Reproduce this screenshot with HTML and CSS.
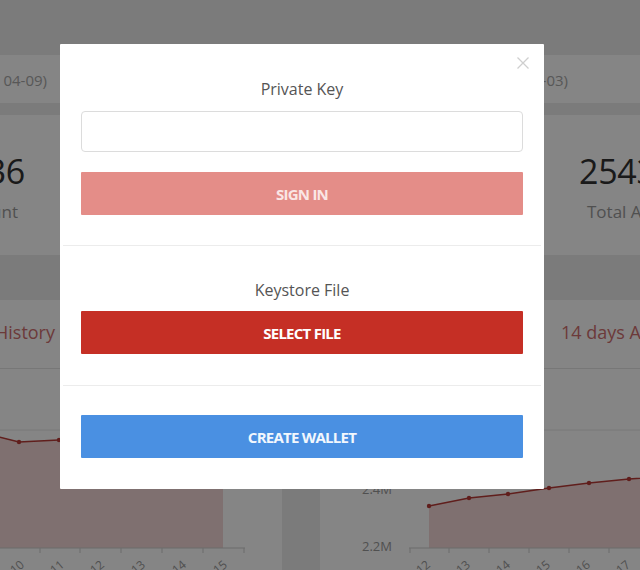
FILE: index.html
```html
<!DOCTYPE html>
<html lang="en">
<head>
<meta charset="utf-8">
<title>Tronscan - Sign in</title>
<link rel="stylesheet" href="styles.css">
</head>
<body>
<div class="page">
  <div class="topbar"></div>

  <div class="band band-head">
    <div class="cell cell-l head-l"><span class="head-text">Transactions (03-27 ~ 04-09)</span></div>
    <div class="cell cell-r head-r"><span class="head-text">Accounts (03-21 ~ 04-03)</span></div>
  </div>

  <div class="band band-stats">
    <div class="cell cell-l stat stat-l">
      <div class="stat-num">1523436</div>
      <div class="stat-label">Transactions Count</div>
    </div>
    <div class="cell cell-r stat stat-r">
      <div class="stat-num">2543187</div>
      <div class="stat-label">Total Accounts</div>
    </div>
  </div>

  <div class="band band-charts">
    <div class="chart-card chart-l">
      <div class="chart-head"><span class="chart-title">14 days Transaction History</span></div>
      <svg class="chart-svg" width="282" height="201" viewBox="0 0 282 201">
        <line x1="0" y1="61" x2="245" y2="61" class="grid"/>
        <polygon class="area" points="-5,67 19,73 59,71 100,69 140,67 181,65 223,63 223,179 -5,179"/>
        <polyline class="series" points="-5,67 19,73 59,71 100,69 140,67 181,65 223,63"/>
        <circle cx="19" cy="73" r="2.2" class="dot"/>
        <circle cx="59" cy="71" r="2.2" class="dot"/>
        <circle cx="100" cy="69" r="2.2" class="dot"/>
        <circle cx="140" cy="67" r="2.2" class="dot"/>
        <circle cx="181" cy="65" r="2.2" class="dot"/>
        <circle cx="223" cy="63" r="2.2" class="dot"/>
        <line x1="0" y1="179" x2="245" y2="179" class="axis"/>
        <line x1="40" y1="179" x2="40" y2="184" class="axis"/>
        <line x1="80" y1="179" x2="80" y2="184" class="axis"/>
        <line x1="121" y1="179" x2="121" y2="184" class="axis"/>
        <line x1="162" y1="179" x2="162" y2="184" class="axis"/>
        <line x1="203" y1="179" x2="203" y2="184" class="axis"/>
        <line x1="244" y1="179" x2="244" y2="184" class="axis"/>
        <text x="25" y="197" class="xlab" transform="rotate(-40 25 197)">04-10</text>
        <text x="65" y="197" class="xlab" transform="rotate(-40 65 197)">04-11</text>
        <text x="105" y="197" class="xlab" transform="rotate(-40 105 197)">04-12</text>
        <text x="146" y="197" class="xlab" transform="rotate(-40 146 197)">04-13</text>
        <text x="187" y="197" class="xlab" transform="rotate(-40 187 197)">04-14</text>
        <text x="228" y="197" class="xlab" transform="rotate(-40 228 197)">04-15</text>
      </svg>
    </div>
    <div class="chart-card chart-r">
      <div class="chart-head"><span class="chart-title">14 days Address Growth</span></div>
      <svg class="chart-svg" width="320" height="201" viewBox="0 0 320 201">
        <line x1="90" y1="61" x2="320" y2="61" class="grid"/>
        <text x="72" y="125" class="ylab">2.4M</text>
        <text x="72" y="182" class="ylab">2.2M</text>
        <polygon class="area" points="109,137 149,129 188,125 229,119 269,114 309,110 349,107 349,179 109,179"/>
        <polyline class="series" points="109,137 149,129 188,125 229,119 269,114 309,110 349,107"/>
        <circle cx="109" cy="137" r="2.2" class="dot"/>
        <circle cx="149" cy="129" r="2.2" class="dot"/>
        <circle cx="188" cy="125" r="2.2" class="dot"/>
        <circle cx="229" cy="119" r="2.2" class="dot"/>
        <circle cx="269" cy="114" r="2.2" class="dot"/>
        <circle cx="309" cy="110" r="2.2" class="dot"/>
        <line x1="89" y1="179" x2="320" y2="179" class="axis"/>
        <line x1="90" y1="179" x2="90" y2="184" class="axis"/>
        <line x1="129" y1="179" x2="129" y2="184" class="axis"/>
        <line x1="169" y1="179" x2="169" y2="184" class="axis"/>
        <line x1="209" y1="179" x2="209" y2="184" class="axis"/>
        <line x1="249" y1="179" x2="249" y2="184" class="axis"/>
        <line x1="289" y1="179" x2="289" y2="184" class="axis"/>
        <text x="111" y="197" class="xlab" transform="rotate(-40 111 197)">04-12</text>
        <text x="151" y="197" class="xlab" transform="rotate(-40 151 197)">04-13</text>
        <text x="191" y="197" class="xlab" transform="rotate(-40 191 197)">04-14</text>
        <text x="231" y="197" class="xlab" transform="rotate(-40 231 197)">04-15</text>
        <text x="271" y="197" class="xlab" transform="rotate(-40 271 197)">04-16</text>
        <text x="311" y="197" class="xlab" transform="rotate(-40 311 197)">04-17</text>
      </svg>
    </div>
  </div>
</div>

<div class="overlay"></div>

<div class="modal" role="dialog">
  <button class="close" aria-label="Close">
    <svg width="12" height="12" viewBox="0 0 12 12"><path d="M0.5 0.5 L11.5 11.5 M11.5 0.5 L0.5 11.5" stroke="#cfcfcf" stroke-width="1.3" fill="none"/></svg>
  </button>
  <div class="section sec-key">
    <div class="label">Private Key</div>
    <input class="input" type="text">
    <div class="btn btn-disabled">SIGN IN</div>
  </div>
  <div class="divider"></div>
  <div class="section sec-file">
    <div class="label">Keystore File</div>
    <div class="btn btn-red">SELECT FILE</div>
  </div>
  <div class="divider"></div>
  <div class="section sec-create">
    <div class="btn btn-blue">CREATE WALLET</div>
  </div>
</div>
</body>
</html>
```

FILE: styles.css
```css
* { box-sizing: border-box; }
html, body { margin: 0; padding: 0; }
body {
  width: 640px;
  height: 570px;
  overflow: hidden;
  background: #ebebeb;
  font-family: "Open Sans", "Liberation Sans", sans-serif;
}

.page { width: 640px; }
.topbar { height: 55px; }

.band {
  display: grid;
  grid-template-columns: 282px 320px;
  column-gap: 38px;
}

.cell { display: flex; white-space: nowrap; }

.band-head { height: 48px; background: #fff; }
.head-l { justify-content: flex-end; padding-right: 235px; }
.head-r { justify-content: flex-end; padding-right: 72px; }
.head-text { font-size: 15px; line-height: 50px; color: #a8a8a8; }

.band-stats { height: 140px; background: #fff; margin-top: 12px; }
.stat { flex-direction: column; padding-top: 36px; }
.stat-l { align-items: flex-end; padding-right: 257px; }
.stat-r { align-items: flex-start; padding-left: 259px; }
.stat-num { font-size: 34px; line-height: 40px; color: #333; letter-spacing: -0.3px; }
.stat-label { font-size: 17px; line-height: 22px; color: #9a9a9a; margin-top: 10px; }
.stat-l .stat-label { margin-right: 7px; }
.stat-r .stat-label { margin-left: 8px; }

.band-charts { margin-top: 45px; height: 270px; }
.chart-card { background: #fff; display: flex; flex-direction: column; overflow: hidden; }
.chart-head {
  height: 69px;
  border-bottom: 1px solid #e4e4e4;
  display: flex;
  white-space: nowrap;
  padding-bottom: 4px;
}
.chart-l .chart-head { justify-content: flex-end; padding-right: 227px; }
.chart-r .chart-head { justify-content: flex-start; padding-left: 241px; }
.chart-title { font-size: 18px; line-height: 64px; color: #d07070; }
.chart-svg { display: block; overflow: visible; }

.grid { stroke: #e6e6e6; stroke-width: 1; }
.axis { stroke: #cfcfcf; stroke-width: 1; }
.area { fill: rgba(194, 53, 49, 0.2); }
.series { fill: none; stroke: #b83a36; stroke-width: 1.4; }
.dot { fill: #b83a36; }
.xlab { font-family: "Open Sans", sans-serif; font-size: 12px; fill: #9a9a9a; text-anchor: end; }
.ylab { font-family: "Open Sans", sans-serif; font-size: 13px; fill: #9a9a9a; text-anchor: end; }

.overlay {
  position: fixed;
  inset: 0;
  background: rgba(0, 0, 0, 0.48);
}

.modal {
  position: fixed;
  left: 60px;
  top: 44px;
  width: 484px;
  background: #fff;
  border-radius: 1px;
}

.close {
  position: absolute;
  top: 13px;
  right: 15px;
  width: 12px;
  height: 12px;
  padding: 0;
  border: 0;
  background: none;
  display: block;
}
.close svg { display: block; }

.section { padding: 0 21px; display: flex; flex-direction: column; }
.sec-key { padding-top: 34px; padding-bottom: 30px; }
.sec-file { padding-top: 33px; padding-bottom: 31px; }
.sec-create { padding-top: 29px; padding-bottom: 31px; }

.label {
  font-size: 16px;
  line-height: 22px;
  color: #555;
  text-align: center;
}

.input {
  margin-top: 11px;
  height: 41px;
  width: 100%;
  border: 1px solid #dcdcdc;
  border-radius: 4px;
  background: #fff;
  font-family: inherit;
}

.btn {
  height: 43px;
  display: flex;
  align-items: center;
  justify-content: center;
  font-size: 15px;
  font-weight: 700;
  letter-spacing: -0.75px;
  color: #fff;
  border-radius: 1px;
}
.sec-key .btn { margin-top: 20px; }
.sec-file .btn { margin-top: 10px; }

.btn-disabled { background: #e48d88; color: #fae6e5; }
.btn-red { background: #c52f25; }
.btn-blue { background: #4a90e2; color: #f2f7fd; }

.divider { height: 1px; background: #ececec; margin: 0 3px; }
```
